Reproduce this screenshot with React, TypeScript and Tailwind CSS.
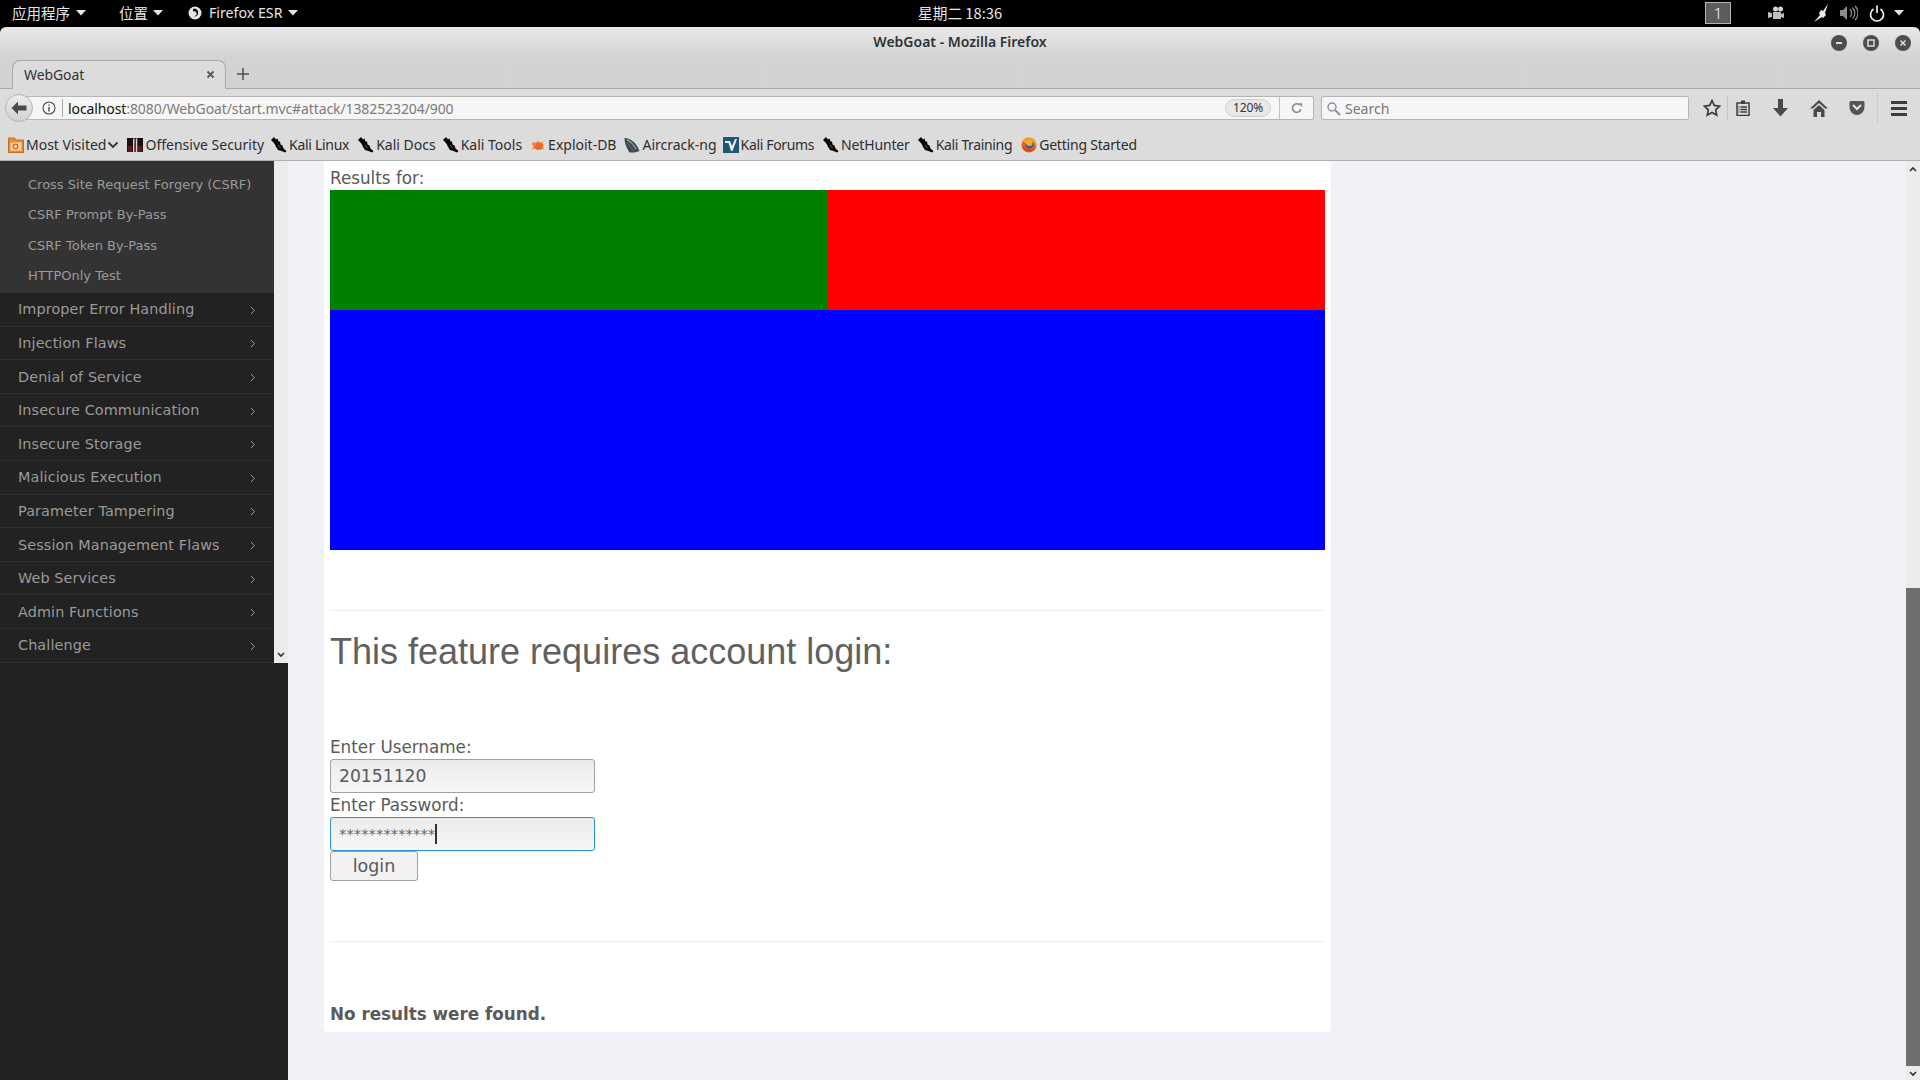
import React from "react";

function Caret({ className = "" }: { className?: string }) {
  return (
    <svg width="10" height="6" viewBox="0 0 10 6" className={className}>
      <path d="M0 0h10L5 5.500z" fill="#e6e6e6" />
    </svg>
  );
}

function Dragon() {
  return (
    <svg width="16" height="16" viewBox="0 0 16 16" className="shrink-0">
      <path d="M0 3 3 0l2 2.500L6.500 1.500 7.500 4.500 9 4.500l.5 3 2 1 1 3 3 2.500-1.500 1.500-3.500-1.500-3.500-1-2.500-4L4 7.500 2 5z" fill="#050505" />
      <path d="M7 8 9.500 11" stroke="#8f8f8f" strokeWidth="0.700" />
    </svg>
  );
}

function Firefox({ size = 16 }: { size?: number }) {
  return (
    <svg width={size} height={size} viewBox="0 0 16 16" className="shrink-0">
      <circle cx="8" cy="8" r="7.500" fill="#e8661d" />
      <circle cx="8.600" cy="7.400" r="4.200" fill="#2a5ea8" />
      <path d="M2 4.500C4 1 9 0 12 2c2.500 1.500 3.500 4.500 3 7-1-2.500-2-3.500-4-4.500 1 1.500 1 3-.5 4-1.500 1-4 .5-5-1C4.500 6 4 5.500 2 4.500z" fill="#f6a623" />
      <path d="M1 9c1 4 5 6 8.500 5.500 2.500-.5 4.500-2.500 5.500-5-2 2.500-5 3.500-8 2.500C4.500 11.500 2.500 10.500 1 9z" fill="#d8401a" />
    </svg>
  );
}

type BM = { label: string; icon: React.ReactNode; cls: string; text: string };

const bookmarks: BM[] = [
  {
    label: "Offensive Security",
    cls: "ml-[8px]",
    text: "",
    icon: (
      <svg width="16" height="16" viewBox="0 0 16 16" className="shrink-0">
        <rect y="1" width="16" height="14" fill="#1e0f10" />
        <rect x="1" y="9" width="4" height="6" fill="#5a1a1c" />
        <rect x="11" y="9" width="4" height="6" fill="#5a1a1c" />
        <path d="M6 1.500h1.500v13.500H6zM8.800 1.500h1.500v13.500H8.800z" fill="#d8d2cc" />
        <path d="M7.500 6h1.300v9H7.500z" fill="#8a2326" />
      </svg>
    ),
  },
  { label: "Kali Linux", cls: "ml-[7px]", text: "tracking-[-0.3px]", icon: <Dragon /> },
  { label: "Kali Docs", cls: "ml-[9px]", text: "", icon: <Dragon /> },
  { label: "Kali Tools", cls: "ml-[7px]", text: "", icon: <Dragon /> },
  {
    label: "Exploit-DB",
    cls: "ml-[8px]",
    text: "",
    icon: (
      <svg width="16" height="16" viewBox="0 0 16 16" className="shrink-0">
        <ellipse cx="8.500" cy="9" rx="5" ry="3.800" fill="#ee6a22" />
        <circle cx="4" cy="7" r="2" fill="#f08a3c" />
        <path d="M2 12 5 10M7 13l1-2M11 13l-1-2M14 12l-3-2M13 5l-3 2M8 4v3" stroke="#ee6a22" strokeWidth="1" />
      </svg>
    ),
  },
  {
    label: "Aircrack-ng",
    cls: "ml-[8px]",
    text: "",
    icon: (
      <svg width="16" height="16" viewBox="0 0 16 16" className="shrink-0">
        <path d="M0.500 1c6 0 12 5 15 13l-5 1.500-5 0C2.500 11 0.500 6.500 0.500 1z" fill="#3d4a4e" />
        <path d="M3 3c3 1 6 4 9 9" stroke="#a8c0d0" strokeWidth="1.200" fill="none" />
        <path d="M3 5c2 3 4 6 7 9M6 4c2 3 4 5 6 9" stroke="#6f7d80" strokeWidth="0.800" fill="none" />
      </svg>
    ),
  },
  {
    label: "Kali Forums",
    cls: "ml-[6px]",
    text: "tracking-[-0.35px]",
    icon: (
      <svg width="16" height="16" viewBox="0 0 16 16" className="shrink-0">
        <rect width="16" height="16" fill="#1f5673" />
        <path d="M2 4h5l2 5 3-7h2l-4.500 12H8L5.500 6H2z" fill="#e8f0f4" />
      </svg>
    ),
  },
  { label: "NetHunter", cls: "ml-[9px]", text: "tracking-[-0.15px]", icon: <Dragon /> },
  { label: "Kali Training", cls: "ml-[8px]", text: "tracking-[-0.35px]", icon: <Dragon /> },
  { label: "Getting Started", cls: "ml-[9px]", text: "tracking-[-0.2px]", icon: <Firefox /> },
];

const subItems = [
  "Cross Site Request Forgery (CSRF)",
  "CSRF Prompt By-Pass",
  "CSRF Token By-Pass",
  "HTTPOnly Test",
];

const menuItems = [
  "Improper Error Handling",
  "Injection Flaws",
  "Denial of Service",
  "Insecure Communication",
  "Insecure Storage",
  "Malicious Execution",
  "Parameter Tampering",
  "Session Management Flaws",
  "Web Services",
  "Admin Functions",
  "Challenge",
];

function WinBtn({ children }: { children: React.ReactNode }) {
  return (
    <div className="flex h-4 w-4 items-center justify-center rounded-full bg-[#4d4d4d]">
      <svg width="10" height="10" viewBox="0 0 10 10">{children}</svg>
    </div>
  );
}

function TopBar() {
  return (
    <div className="flex h-[27px] items-center bg-black pb-[1px] font-['Noto_Sans','Noto_Sans_CJK_SC',sans-serif] text-[14.500px] text-[#e6e6e6]">
      <span className="ml-[12px] w-[59px] whitespace-nowrap font-['Noto_Sans_CJK_SC',sans-serif]">应用程序</span>
      <Caret className="ml-[5px]" />
      <span className="ml-[33px] w-[28px] whitespace-nowrap font-['Noto_Sans_CJK_SC',sans-serif]">位置</span>
      <Caret className="ml-[6px]" />
      <svg width="14" height="14" viewBox="0 0 14 14" className="ml-[25px]">
        <circle cx="7" cy="7" r="6.500" fill="#e6e6e6" />
        <path d="M5 3c3-1 6 1 5 5-.5 2-3 3-4 2 2 0 3-1 2.500-3C8 5.500 6.500 5 5 5.500z" fill="#111" />
      </svg>
      <span className="ml-[7px] w-[74px] whitespace-nowrap text-[14.200px]">Firefox ESR</span>
      <Caret className="ml-[5px]" />
      <span className="ml-[620px] w-[87px] whitespace-nowrap font-['Noto_Sans_CJK_SC',sans-serif] text-[14.700px]">星期二 18:36</span>
      <div className="ml-[700px] flex h-[22px] w-[26px] items-center justify-center border border-[#b5b5b5] bg-[#5c5c5c] text-[15px] font-light text-white">1</div>
      <svg width="17" height="14" viewBox="0 0 17 14" className="ml-[37px]">
        <path d="M0 6l4 1v4l-4 1zM5 6h8v7H5zM13 8l3-1v5l-3-1z" fill="#bdbdbd" />
        <circle cx="7.500" cy="3" r="2.500" fill="#d4d4d4" />
        <circle cx="12.500" cy="3" r="2.500" fill="#d4d4d4" />
      </svg>
      <svg width="17" height="18" viewBox="0 0 17 18" className="ml-[27px]">
        <path d="M16 0l-5 7-2-1-2 3 1 2-6 7 8-5 1 1 3-3-1-2z" fill="#eaeaea" />
      </svg>
      <svg width="18" height="16" viewBox="0 0 18 16" className="ml-[11px]">
        <path d="M0 5h3l4-4v14l-4-4H0z" fill="#8a8a8a" />
        <path d="M10 4c2 2 2 6 0 8M12.500 2.500c3 3 3 8 0 11M15 1c4 4 4 10 0 14" stroke="#8a8a8a" strokeWidth="1.300" fill="none" />
      </svg>
      <svg width="16" height="17" viewBox="0 0 16 17" className="ml-[11px]">
        <path d="M4.500 4a6.500 6.500 0 1 0 7 0" stroke="#f0f0f0" strokeWidth="1.700" fill="none" />
        <path d="M8 0.500v7.500" stroke="#f0f0f0" strokeWidth="1.700" />
      </svg>
      <Caret className="ml-[9px]" />
    </div>
  );
}

function TitleBar() {
  return (
    <div className="relative h-[62px] rounded-t-[6px] border-b border-[#a9a9a9] bg-gradient-to-b from-[#e9e9e9] to-[#d3d3d3] to-50% font-['Noto_Sans',sans-serif]">
      <div className="pt-[5px] text-center text-[14px] font-semibold leading-[20px] text-[#2e3436]">
        WebGoat - Mozilla Firefox
      </div>
      <div className="absolute right-[9px] top-[8px] flex gap-[16px]">
        <WinBtn><path d="M2 5h6" stroke="#ddd" strokeWidth="2" /></WinBtn>
        <WinBtn><rect x="2" y="2" width="6" height="6" stroke="#ddd" strokeWidth="1.500" fill="none" /></WinBtn>
        <WinBtn><path d="M2.500 2.500l5 5M7.500 2.500l-5 5" stroke="#ddd" strokeWidth="1.500" /></WinBtn>
      </div>
      <div className="absolute bottom-[-1px] left-[12px] flex h-[29px] w-[214px] items-center rounded-t-[8px] border border-b-0 border-[#a9a9a9] bg-[#dcdcdc] pb-[1px] pl-[11px] pr-[10px] text-[14px] tracking-[-0.1px] text-[#333]">
        <span className="flex-1">WebGoat</span>
        <svg width="9" height="9" viewBox="0 0 9 9">
          <path d="M1.500 1.500l6 6M7.500 1.500l-6 6" stroke="#555" strokeWidth="1.800" />
        </svg>
      </div>
      <svg width="14" height="14" viewBox="0 0 14 14" className="absolute bottom-[7px] left-[236px]">
        <path d="M7 1v12M1 7h12" stroke="#4f4f4f" strokeWidth="1.500" />
      </svg>
    </div>
  );
}

function NavBar() {
  return (
    <div className="flex h-[43px] items-center bg-[#dcdcdc] pb-[5px] font-['Noto_Sans',sans-serif]">
      <div className="relative z-10 ml-[5px] flex h-[28px] w-[28px] items-center justify-center rounded-full border border-[#b5b5b5] bg-gradient-to-b from-[#ececec] to-[#d2d2d2]">
        <svg width="16" height="14" viewBox="0 0 16 14">
          <path d="M7 0.500 0.500 7 7 13.500V9.500h8.500v-5H7z" fill="#4a4a4a" />
        </svg>
      </div>
      <div className="ml-[-9px] flex h-[24px] w-[1290px] items-center rounded-r-[2px] border border-[#b5b5b5] bg-[#f6f6f6] pl-[17px] text-[14px] tracking-[-0.1px]">
        <svg width="14" height="14" viewBox="0 0 14 14">
          <circle cx="7" cy="7" r="6" stroke="#4a4a4a" strokeWidth="1.100" fill="none" />
          <path d="M7 6v4.500M7 3.500v1.300" stroke="#4a4a4a" strokeWidth="1.400" />
        </svg>
        <div className="ml-[6px] h-[18px] w-px bg-[#a8a8a8]" />
        <span className="ml-[5px] whitespace-nowrap text-[#111]">localhost</span>
        <span className="flex-1 whitespace-nowrap text-[#7b7b7b]">:8080/WebGoat/start.mvc#attack/1382523204/900</span>
        <div className="flex h-[18px] w-[46px] items-center justify-center rounded-[9px] border border-[#cfcfcf] bg-[#e8e8e8] text-[12px] text-[#333]">120%</div>
        <div className="ml-[8px] h-full w-px bg-[#c4c4c4]" />
        <div className="flex w-[33px] items-center justify-center">
          <svg width="12" height="12" viewBox="0 0 14 14">
            <path d="M11.500 8.500A5 5 0 1 1 10 3.300" stroke="#7f93a3" strokeWidth="2" fill="none" />
            <path d="M8.500 1.500h4.500v4.500z" fill="#7f93a3" />
          </svg>
        </div>
      </div>
      <div className="ml-[7px] flex h-[24px] w-[368px] items-center rounded-[2px] border border-[#b5b5b5] bg-[#f6f6f6] pl-[4px] text-[14px] text-[#777]">
        <svg width="15" height="15" viewBox="0 0 15 15">
          <circle cx="6" cy="6" r="4" stroke="#8a94a0" strokeWidth="1.500" fill="none" />
          <path d="M9 9l5 5" stroke="#8a94a0" strokeWidth="2" />
        </svg>
        <span className="ml-[4px]">Search</span>
      </div>
      <svg width="18" height="18" viewBox="0 0 18 18" className="ml-[14px]">
        <path d="M9 1.500l2.300 4.900 5.300.7-3.900 3.700 1 5.300L9 13.500l-4.700 2.600 1-5.300L1.400 7.100l5.300-.7z" stroke="#3d3d3d" strokeWidth="1.700" fill="none" />
      </svg>
      <div className="ml-[6px] h-[22px] w-px bg-[#c4c4c4]" />
      <svg width="14" height="16" viewBox="0 0 14 16" className="ml-[8px]">
        <path d="M1 3h12v12.500H1z" fill="none" stroke="#3d3d3d" strokeWidth="1.500" />
        <path d="M5 0.500h4v3.500H5z" fill="#3d3d3d" />
        <path d="M4.500 7h6.500M4.500 9.500h6.500M4.500 12h6.500M2.500 7h1M2.500 9.500h1M2.500 12h1" stroke="#3d3d3d" strokeWidth="1.400" />
      </svg>
      <svg width="15" height="18" viewBox="0 0 15 18" className="ml-[23px]">
        <path d="M5 0h5v9h5l-7.500 8.500L0 9h5z" fill="#4a4a4a" />
      </svg>
      <svg width="18" height="17" viewBox="0 0 18 17" className="ml-[22px]">
        <path d="M9 0 0 8.500h3L9 3l6 5.500h3z" fill="#4a4a4a" />
        <path d="M9 5 3.500 10v7H7v-5h4v5h3.500v-7z" fill="#4a4a4a" />
      </svg>
      <svg width="16" height="16" viewBox="0 0 16 16" className="ml-[21px]">
        <path d="M2 1h12a1.500 1.500 0 0 1 1.500 1.500V7a7.500 8 0 0 1-15 0V2.500A1.500 1.500 0 0 1 2 1z" fill="#555" />
        <path d="M4 5l4 4 4-4" stroke="#e4e4e4" strokeWidth="2" fill="none" />
      </svg>
      <div className="ml-[12px] h-[30px] w-px bg-[#cacaca]" />
      <div className="ml-[13px] flex flex-col gap-[3px]">
        <div className="h-[3px] w-[16px] bg-[#3d3d3d]" />
        <div className="h-[3px] w-[16px] bg-[#3d3d3d]" />
        <div className="h-[3px] w-[16px] bg-[#3d3d3d]" />
      </div>
    </div>
  );
}

function BookmarkBar() {
  return (
    <div className="flex h-[29px] items-center border-b border-[#b0b0b0] bg-[#dcdcdc] pb-[3px] pl-[8px] font-['Noto_Sans',sans-serif] text-[14px] text-[#2e2e2e]">
      <svg width="16" height="16" viewBox="0 0 16 16" className="shrink-0">
        <path d="M0.500 1h6l1 2h8v12.500H0.500z" fill="#e98a3a" stroke="#c96a1d" />
        <rect x="2.500" y="5.500" width="11" height="8" fill="#f8d9b0" />
        <circle cx="7.500" cy="9.500" r="2.300" fill="none" stroke="#c9661c" strokeWidth="1.300" />
      </svg>
      <span className="ml-[2px] whitespace-nowrap">Most Visited</span>
      <svg width="12" height="8" viewBox="0 0 12 8" className="ml-[1px]">
        <path d="M1.500 1.500 6 6l4.500-4.500" stroke="#333" strokeWidth="1.800" fill="none" />
      </svg>
      {bookmarks.map((b) => (
        <div key={b.label} className={`flex items-center whitespace-nowrap ${b.cls}`}>
          {b.icon}
          <span className={`ml-[2px] ${b.text}`}>{b.label}</span>
        </div>
      ))}
    </div>
  );
}

function Sidebar() {
  return (
    <div className="flex w-[288px] shrink-0 flex-col bg-[#222222] font-['DejaVu_Sans',sans-serif]">
      <div className="flex h-[502px] bg-[#ececec]">
        <div className="w-[274px] bg-[#222222]">
          <div className="flex h-[132px] flex-col bg-[#333333] pl-[28px] pt-[8px]">
            {subItems.map((s) => (
              <div key={s} className="flex h-[30.500px] items-center whitespace-nowrap text-[13px] text-[#9a9a9a]">
                {s}
              </div>
            ))}
          </div>
          {menuItems.map((m) => (
            <div
              key={m}
              className="flex h-[33.600px] items-center justify-between border-b border-[#2c2c2c] pl-[18px] pr-[18px] pt-[2px] text-[14.400px] tracking-[0.1px] text-[#9a9a9a]"
            >
              <span>{m}</span>
              <svg width="6" height="9" viewBox="0 0 6 9">
                <path d="M1 1l3.500 3.500L1 8" stroke="#9a9a9a" strokeWidth="1" fill="none" />
              </svg>
            </div>
          ))}
        </div>
        <div className="flex w-[14px] flex-col items-center justify-end pb-[5px]">
          <svg width="8" height="6" viewBox="0 0 8 6">
            <path d="M1 1l3 3 3-3" stroke="#333" strokeWidth="1.600" fill="none" />
          </svg>
        </div>
      </div>
    </div>
  );
}

function Panel() {
  return (
    <div className="ml-[36px] flex h-[871px] w-[1007px] flex-col rounded-b-[4px] bg-white px-[6px] font-['DejaVu_Sans',sans-serif] text-[16.800px] text-[#5a5a5a]">
      <div className="h-[29px] pt-[5px] leading-[24px]">Results for:</div>
      <div className="grid h-[360px] grid-cols-2 grid-rows-[120px_240px]">
        <div className="bg-[#008000]" />
        <div className="bg-[#ff0000]" />
        <div className="col-span-2 bg-[#0000ff]" />
      </div>
      <div className="mt-[60px] border-t border-[#eeeeee]" />
      <h1 className="mt-[19px] font-['Liberation_Sans',sans-serif] text-[36px] font-normal leading-[44px] text-[#606060]">
        This feature requires account login:
      </h1>
      <div className="mt-[61px] h-[24px] leading-[24px]">Enter Username:</div>
      <input
        readOnly
        value="20151120"
        className="h-[34px] w-[265px] rounded-[3px] border border-[#a0a0a0] bg-gradient-to-b from-[#ebebeb] to-[#f7f7f7] px-[8px] font-['DejaVu_Sans',sans-serif] text-[17.200px] text-[#5a5a5a] outline-none"
      />
      <div className="h-[24px] leading-[24px]">Enter Password:</div>
      <div className="flex h-[34px] w-[265px] items-center rounded-[3px] border border-[#2a8fd0] bg-gradient-to-b from-[#ebebeb] to-[#f7f7f7] px-[8px]">
        <span className="text-[14.800px] text-[#666]">*************</span>
        <div className="h-[20px] w-[2px] bg-[#333]" />
      </div>
      <button className="h-[30px] w-[88px] rounded-[3px] border border-[#a0a0a0] bg-[#f2f2f2] text-[17.500px] text-[#5a5a5a]">
        login
      </button>
      <div className="mt-[60px] border-t border-[#eeeeee]" />
      <div className="mt-[60px] text-[16.800px] font-bold leading-[24px]">No results were found.</div>
    </div>
  );
}

function PageScrollbar() {
  return (
    <div className="flex w-[14px] shrink-0 flex-col bg-[#ececec]">
      <div className="flex h-[427px] justify-center pt-[5px]">
        <svg width="8" height="6" viewBox="0 0 8 6">
          <path d="M1 5l3-3 3 3" stroke="#333" strokeWidth="1.600" fill="none" />
        </svg>
      </div>
      <div className="h-[478px] bg-[#6f6f6f]" />
      <div className="flex flex-1 justify-center pt-[5px]">
        <svg width="8" height="6" viewBox="0 0 8 6">
          <path d="M1 1l3 3 3-3" stroke="#333" strokeWidth="1.600" fill="none" />
        </svg>
      </div>
    </div>
  );
}

export default function App() {
  return (
    <div className="flex h-[1080px] w-[1920px] flex-col overflow-hidden bg-black">
      <TopBar />
      <TitleBar />
      <NavBar />
      <BookmarkBar />
      <div className="flex flex-1 bg-[#f0f2f8]">
        <Sidebar />
        <div className="flex-1">
          <Panel />
        </div>
        <PageScrollbar />
      </div>
    </div>
  );
}
